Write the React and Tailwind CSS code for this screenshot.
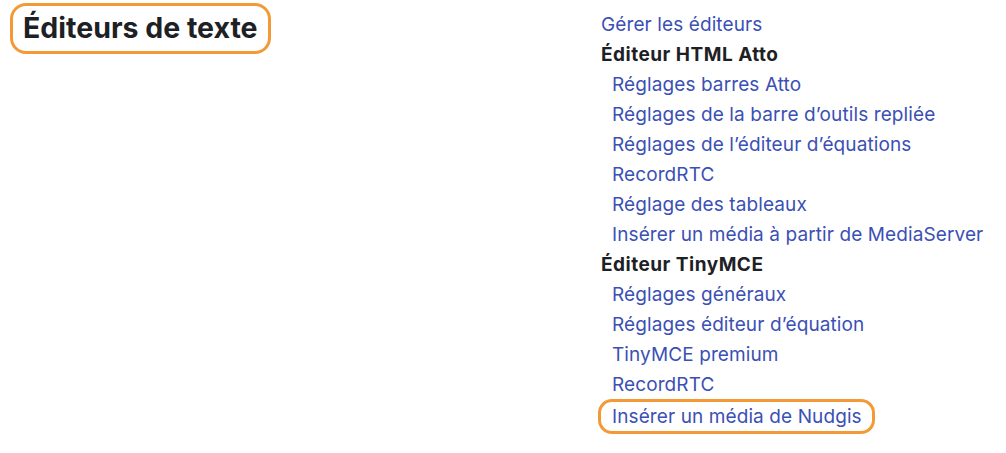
import React from 'react';

const sections = [
    { type: 'link', label: 'Gérer les éditeurs', indent: false },
    { type: 'head', label: 'Éditeur HTML Atto' },
    { type: 'link', label: 'Réglages barres Atto', indent: true },
    { type: 'link', label: 'Réglages de la barre d’outils repliée', indent: true },
    { type: 'link', label: 'Réglages de l’éditeur d’équations', indent: true },
    { type: 'link', label: 'RecordRTC', indent: true },
    { type: 'link', label: 'Réglage des tableaux', indent: true },
    { type: 'link', label: 'Insérer un média à partir de MediaServer', indent: true },
    { type: 'head', label: 'Éditeur TinyMCE' },
    { type: 'link', label: 'Réglages généraux', indent: true },
    { type: 'link', label: 'Réglages éditeur d’équation', indent: true },
    { type: 'link', label: 'TinyMCE premium', indent: true },
    { type: 'link', label: 'RecordRTC', indent: true },
    { type: 'link', label: 'Insérer un média de Nudgis', indent: true, highlight: true },
];

const App = () => {
    return (
        <div className="w-[1006px] h-[453px] bg-white flex font-['Inter',sans-serif] overflow-hidden">
            <div className="w-[598px] pl-[10px] pt-[3px]">
                <div className="inline-block border-[3px] border-[#f39a37] rounded-[16px] pl-[10px] pr-[10px] pt-[5px] pb-[6px]">
                    <h1 className="text-[28.5px] leading-[34px] font-bold text-[#1d2125]">Éditeurs de texte</h1>
                </div>
            </div>
            <ul className="pt-[10px] text-[19px] leading-[30px] tracking-[0.1px]">
                {sections.map((item, i) => {
                    if (item.type === 'head') {
                        return (
                            <li key={i} className="pl-[3px] font-bold text-[19px] tracking-[0.5px] text-[#1d2125]">{item.label}</li>
                        );
                    }
                    if (item.highlight) {
                        return (
                            <li key={i} className="-mt-[1px]">
                                <span className="inline-block border-[3px] border-[#f39a37] rounded-[14px] pl-[11px] pr-[10px] leading-[29px]">
                                    <a href="#" className="text-[#3b50b5]">{item.label}</a>
                                </span>
                            </li>
                        );
                    }
                    return (
                        <li key={i} className={item.indent ? 'pl-[14px]' : 'pl-[3px]'}>
                            <a href="#" className="text-[#3b50b5]">{item.label}</a>
                        </li>
                    );
                })}
            </ul>
        </div>
    );
};

export default App;
